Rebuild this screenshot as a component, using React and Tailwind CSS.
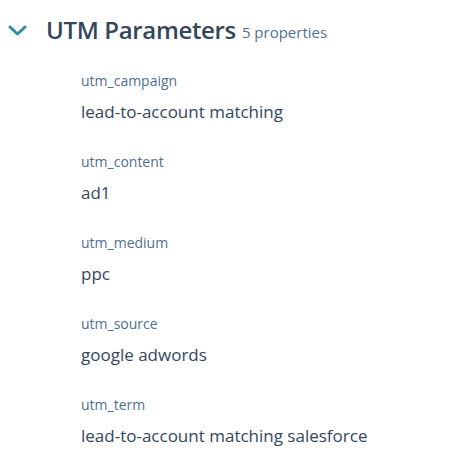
import React from 'react';

const props = [
  { name: 'utm_campaign', value: 'lead-to-account matching' },
  { name: 'utm_content', value: 'ad1' },
  { name: 'utm_medium', value: 'ppc' },
  { name: 'utm_source', value: 'google adwords' },
  { name: 'utm_term', value: 'lead-to-account matching salesforce' },
];

const App = () => {
  return (
    <div className="w-[473px] h-[465px] bg-white font-['Open_Sans',sans-serif] text-[#33475b]">
      {/* Section header */}
      <div className="flex items-center pt-[14px] pl-[8px]">
        <svg className="w-[19px] h-[11px] text-[#2f8ca5]" viewBox="0 0 19 11" fill="none">
          <path d="M2 2l7.5 7 7.5-7" stroke="currentColor" strokeWidth="3" strokeLinecap="round" strokeLinejoin="round" />
        </svg>
        <h2 className="ml-[19px] text-[24px] font-semibold leading-[32px] tracking-[-0.35px]">UTM Parameters</h2>
        <span className="ml-[6px] mt-[4px] text-[15px] text-[#516f90]">{props.length} properties</span>
      </div>

      {/* Property list */}
      <div className="pl-[81px] pt-[26px] flex flex-col gap-[30px]">
        {props.map((p) => (
          <div key={p.name} className="flex flex-col">
            <span className="text-[14px] leading-[18px] text-[#516f90]">{p.name}</span>
            <span className="mt-[11px] text-[17px] leading-[22px] text-[#33475b]">{p.value}</span>
          </div>
        ))}
      </div>
    </div>
  );
};

export default App;
